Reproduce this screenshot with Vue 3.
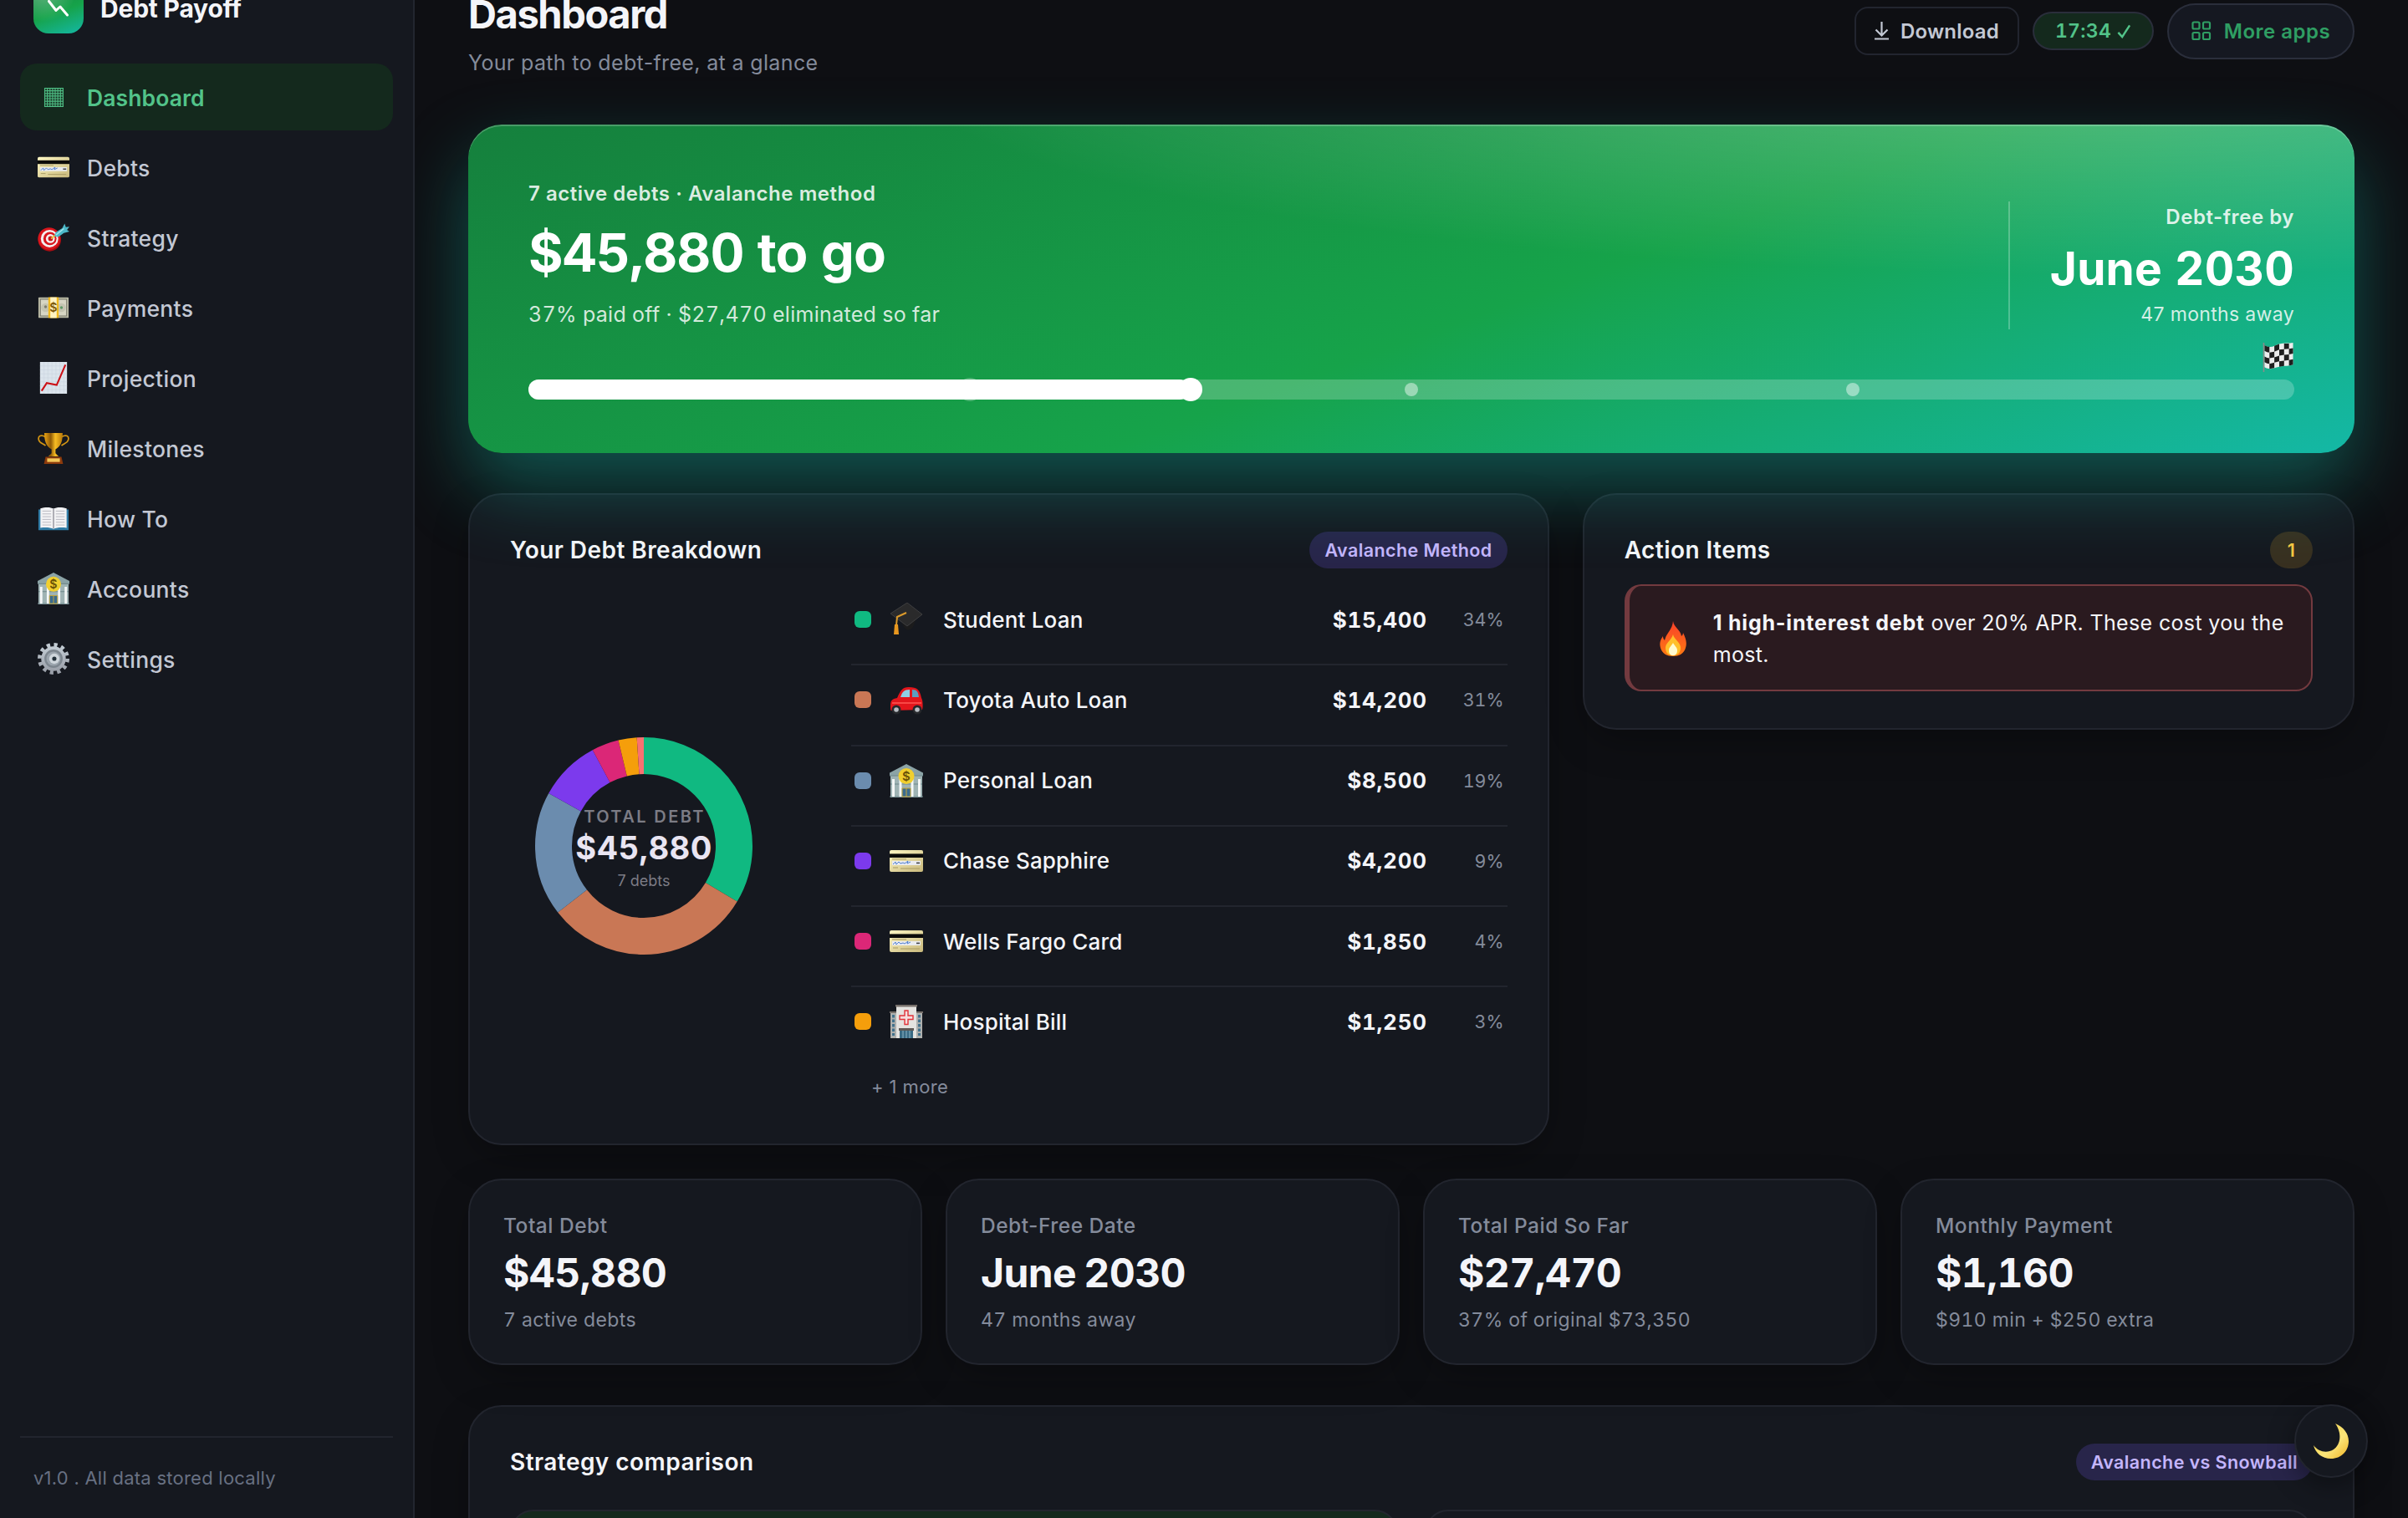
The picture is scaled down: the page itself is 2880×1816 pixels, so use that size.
<template>
    <div class="app">
        <svg class="sprite" aria-hidden="true">
            <defs>
                <linearGradient id="g-card" x1="0" y1="0" x2="1" y2="1"><stop offset="0" stop-color="#fdf6c3" /><stop offset="1" stop-color="#c9b97c" /></linearGradient>
                <linearGradient id="g-gold" x1="0" y1="0" x2="1" y2="0"><stop offset="0" stop-color="#e9a313" /><stop offset=".35" stop-color="#8f5a06" /><stop offset=".6" stop-color="#f7bd24" /><stop offset="1" stop-color="#b87908" /></linearGradient>
                <linearGradient id="g-fire" x1="0" y1="0" x2="0" y2="1"><stop offset="0" stop-color="#f8402a" /><stop offset="1" stop-color="#ff7a12" /></linearGradient>
                <linearGradient id="g-moon" x1="0" y1="0" x2="1" y2="1"><stop offset="0" stop-color="#f3cf3c" /><stop offset=".6" stop-color="#fbe57a" /><stop offset="1" stop-color="#f0b323" /></linearGradient>
                <linearGradient id="g-gear" x1="0" y1="0" x2="0" y2="1"><stop offset="0" stop-color="#c3ccd4" /><stop offset="1" stop-color="#9a9fa8" /></linearGradient>
            </defs>
            <symbol id="i-grid" viewBox="0 0 40 40">
                <path d="M9 9H32V32H9ZM12.300 9V32M15.600 9V32M18.900 9V32M22.100 9V32M25.400 9V32M28.700 9V32M9 12.300H32M9 15.600H32M9 18.900H32M9 22.100H32M9 25.400H32M9 28.700H32" fill="none" stroke="#4dbb82" stroke-width="1.250" />
            </symbol>
            <symbol id="i-card" viewBox="0 0 40 40">
                <rect x="0" y="7" width="40" height="26" rx="2" fill="url(#g-card)" />
                <rect x="0" y="11.4" width="40" height="4.6" fill="#0b0b09" />
                <rect x="3" y="20" width="34" height="5" fill="#e9ebf0" />
                <path d="M4 24l3-3 1 3 3-3 2 2 3-1 2 1 4-3-1 3 4-2" fill="none" stroke="#4f7fd0" stroke-width="1" />
                <path d="M32 22.4h4" stroke="#444" stroke-width="1.6" />
                <path d="M4 28h6M13 29h23M3 17.8h17" stroke="#a99b63" stroke-width="1" />
            </symbol>
            <symbol id="i-target" viewBox="0 0 40 40">
                <circle cx="15" cy="23" r="14.5" fill="#a80c12" />
                <circle cx="14.5" cy="21.5" r="14" fill="#d8161d" />
                <circle cx="15" cy="21.5" r="11" fill="#f4efef" />
                <circle cx="15.5" cy="21.5" r="8.3" fill="#d8161d" />
                <circle cx="16" cy="21.5" r="5.6" fill="#f4efef" />
                <circle cx="16.3" cy="21.5" r="3" fill="#c9161d" />
                <path d="M17 21.5l6-5" stroke="#e8c13a" stroke-width="2" />
                <path d="M21 18.5l2-5 8-5 3-6 1.500 4.500 4.500-.5-3 4 3 2-7 2-7 5z" fill="#4cb8c8" />
                <path d="M23 17l10-8" stroke="#a6e7ee" stroke-width="1.500" />
            </symbol>
            <symbol id="i-cash" viewBox="0 0 40 40">
                <rect x="1" y="7" width="38" height="26" rx="1" fill="#b9b9a4" />
                <rect x="3.500" y="9.500" width="33" height="21" fill="#d7d6c4" stroke="#77776a" stroke-width="1" />
                <circle cx="10" cy="20" r="5.500" fill="#c4c4b1" />
                <circle cx="30" cy="20" r="5.500" fill="#c4c4b1" />
                <circle cx="10" cy="19" r="1.800" fill="#7c7d70" />
                <circle cx="30" cy="20" r="1.800" fill="#5f9a68" />
                <rect x="13.500" y="7" width="13" height="26" fill="#f0b81c" />
                <rect x="16" y="7" width="8" height="26" fill="#fff3c2" />
                <text x="20" y="25.500" text-anchor="middle" font-family="Inter" font-size="15" font-weight="600" fill="#7d5a0a">$</text>
            </symbol>
            <symbol id="i-chart" viewBox="0 0 40 40">
                <rect x="3" y="0" width="34" height="40" fill="#dbe4ec" />
                <path d="M3 5H37M3 10H37M3 15H37M3 20H37M3 25H37M3 30H37M3 35H37M8 0V40M13 0V40M18 0V40M23 0V40M28 0V40M33 0V40" stroke="#c9d5e0" stroke-width=".6" />
                <path d="M5 36.500l6.500-10 12.500 2.500L35 3.500" fill="none" stroke="#cc1117" stroke-width="2.200" />
            </symbol>
            <symbol id="i-trophy" viewBox="0 0 40 40">
                <path d="M10 6C4 2.500 0 5 1.500 10c1 4 5 4 8.500 7M30 6c6-3.500 10-1 8.500 4-1 4-5 4-8.500 7" fill="none" stroke="#d29413" stroke-width="1.800" />
                <path d="M8.500 1h23c0 10-2 17-9 20.500v5l4 4h-13l4-4v-5C10.500 18 8.500 11 8.500 1z" fill="url(#g-gold)" />
                <path d="M10 31h20l2 9H8z" fill="#8c3a0c" />
                <path d="M12 33h16v4.500H12z" fill="#f2c85a" />
            </symbol>
            <symbol id="i-book" viewBox="0 0 40 40">
                <path d="M1 9h38v26H1z" fill="#2f7ba5" />
                <path d="M3.500 7.500C9 6 16 5.500 20 8c4-2.500 11-2 16.500-.5V32c-6-1-13-.5-16.500 1.500C16.500 31.500 9.500 31 3.500 32z" fill="#f2f2f4" />
                <path d="M20 8v25" stroke="#9a9aa2" stroke-width="1.600" />
                <path d="M6 11h11M6 14.500h11M6 18h11M6 21.500h11M6 25h11M6 28.500h11M23 11h11M23 14.500h11M23 18h11M23 21.500h11M23 25h11M23 28.500h11" stroke="#b3b3bb" stroke-width=".9" />
            </symbol>
            <symbol id="i-bank" viewBox="0 0 40 40">
                <path d="M20 0l20 10.500V14H0v-3.500z" fill="#8ba3a6" />
                <path d="M1 14h38v26H1z" fill="#9fb3b4" />
                <path d="M0 14h40M1 24h38M0 39h40" stroke="#6f888b" stroke-width="1.200" />
                <path d="M4.500 18v21M13 18v21M27 18v21M35.500 18v21" stroke="#f5f7f7" stroke-width="3" />
                <path d="M15 29h10v10H15z" fill="#3b6b8e" stroke="#c5a63a" stroke-width="1" />
                <path d="M20 29v10" stroke="#c5a63a" />
                <circle cx="20" cy="14.500" r="9.500" fill="#f1cf2f" />
                <text x="20" y="20" text-anchor="middle" font-family="Inter" font-size="15" font-weight="600" fill="#6b5308">$</text>
            </symbol>
            <symbol id="i-gear" viewBox="0 0 40 40">
                <circle cx="20" cy="20" r="17.500" fill="none" stroke="url(#g-gear)" stroke-width="5" stroke-dasharray="4.400 4.763" />
                <circle cx="20" cy="20" r="15.500" fill="url(#g-gear)" />
                <circle cx="20" cy="20" r="11.500" fill="#7d868f" />
                <circle cx="20" cy="20" r="9" fill="#9ba4ad" />
                <circle cx="21" cy="20" r="6.500" fill="#cfd6dc" />
                <circle cx="21" cy="20" r="2.700" fill="#23303a" />
            </symbol>
            <symbol id="i-cap" viewBox="0 0 40 40">
                <path d="M13 20l4 9c4 6 10 4 12-2l3-9z" fill="#1b1b1c" />
                <path d="M21 0l18 14-18 14L1 13z" fill="#2a2a2b" stroke="#464647" stroke-width=".8" />
                <path d="M20 12L9 17l-1 10" fill="none" stroke="#dc9a2b" stroke-width="2" />
                <path d="M6 26h4l1 12H5z" fill="#e8971f" />
            </symbol>
            <symbol id="i-car" viewBox="0 0 40 40">
                <path d="M1 27c0-6 2-8 8-9 4-9 6-13 14-13 10 0 13 3 15 13 2 3 2 12 1 14l-37 1c-1 0-1-3-1-6z" fill="#e3161c" />
                <path d="M13 17c2-6 4-9 11-9v9z" fill="#8fd0e6" />
                <path d="M27 8c6 0 7 3 8 9h-8z" fill="#5e9fc0" />
                <path d="M3 24h35" stroke="#ff5a54" stroke-width="1.400" />
                <circle cx="8" cy="32" r="5.500" fill="#26282c" />
                <circle cx="8" cy="32" r="2.800" fill="#b7bcc2" />
                <circle cx="33" cy="32" r="5.500" fill="#26282c" />
                <circle cx="33" cy="32" r="2.800" fill="#b7bcc2" />
            </symbol>
            <symbol id="i-hospital" viewBox="0 0 40 40">
                <path d="M1 9h38v31H1z" fill="#aeb0ae" />
                <path d="M8 1h24v39H8z" fill="#e4e3e0" />
                <path d="M7 0h26v2.500H7zM0 8h8v2H0zM32 8h8v2h-8z" fill="#77706b" />
                <path d="M4.500 12v25M35.500 12v25" stroke="#41718c" stroke-width="3" stroke-dasharray="3.500 2" />
                <path d="M18 7h4v6h6v4.500h-6v6h-4v-6h-6V13h6z" fill="#f6dede" stroke="#e0343a" stroke-width="1.400" />
                <path d="M11 28h18v3H11z" fill="#5f5a57" />
                <path d="M12 31h16v9H12z" fill="#396a84" />
                <path d="M16 31v9M20 31v9M24 31v9" stroke="#8fb4c4" stroke-width="1" />
            </symbol>
            <symbol id="i-fire" viewBox="0 0 40 44">
                <path d="M20 1c1 8 9 10 10 18 1-1 2-2 2-4 3 6 5 12 3 18-2 7-8 10-15 10S7 40 5 33c-2-7 1-11 3-14 0 3 1 4 2 5 2-9 9-12 10-23z" fill="url(#g-fire)" />
                <path d="M20 17c1 6 9 9 9 16 0 6-4 9.500-9 9.500S11 39 11 33c0-6 7-9 9-16z" fill="#ffc02b" />
                <path d="M20 27c1 3 5 5 5 9s-2 6-5 6-5-2-5-6 4-6 5-9z" fill="#fffbd0" />
            </symbol>
            <symbol id="i-flag" viewBox="0 0 38 38">
                <path d="M1 1v36" stroke="#8b8b8b" stroke-width="1.600" />
                <path d="M2 4c8 5 12 0 18-1.500S32 2 37 1v27c-5 2-10 1-17 2.500S9 35 2 31z" fill="#ececec" />
                <path d="M2 4c2 1.300 4 2 6 2v7c-2 0-4-.7-6-2zM14 5l6-2.500v7L14 12zM26 2h6v6.500l-6 .5zM8 13l6-1v7l-6 1zM20 9.500l6-.5v7l-6 1zM32 8.500l5-.8v6.800l-5 1zM2 18c2 1.300 4 2 6 2v7c-2 0-4-.7-6-2zM14 19l6-2v7l-6 1.500zM26 16l6-.5v6.800l-6 .7zM8 27l6-1.500V32l-6 1zM20 24l6-1v6.500l-6 1zM32 22.300l5-1V28l-5 1.300z" fill="#1f1f1f" />
            </symbol>
            <symbol id="i-moon" viewBox="0 0 42 42">
                <path d="M26 0c10 4 16 12 16 21 0 12-9 21-21 21C10 42 2 35 0 26c6 8 16 10 24 5 9-6 10-20 2-31z" fill="url(#g-moon)" />
            </symbol>
        </svg>

        <aside class="sidebar">
            <div class="brand">
                <span class="brand__logo">
                    <svg width="26" height="20" viewBox="0 0 26 20"><path d="M1.500 1.500l8.500 11 5-4.500 8.500 10" fill="none" stroke="#fff" stroke-width="3" stroke-linecap="round" stroke-linejoin="round" /></svg>
                </span>
                <span class="brand__name">Debt Payoff</span>
            </div>
            <nav class="nav">
                <a v-for="n in nav" :key="n.label" class="nav__item" :class="[n.active && 'nav__item--active']">
                    <svg class="nav__icon"><use :href="'#i-' + n.icon" /></svg>
                    <span>{{ n.label }}</span>
                </a>
            </nav>
            <div class="sidebar__foot">v1.0 . All data stored locally</div>
        </aside>

        <main class="main">
            <header class="header">
                <div>
                    <h1 class="header__title">Dashboard</h1>
                    <p class="header__sub">Your path to debt-free, at a glance</p>
                </div>
                <div class="actions">
                    <button class="btn-download">
                        <svg width="17" height="22" viewBox="0 0 17 22"><path d="M8.500 0v16M1.500 9.500l7 7 7-7M0 20.500h17" fill="none" stroke="currentColor" stroke-width="2.200" /></svg>
                        <span>Download</span>
                    </button>
                    <span class="sync"><span>17:34</span><svg width="17" height="17" viewBox="0 0 18 18"><path d="M1.500 10.500l5 5.500L16 1.500" fill="none" stroke="currentColor" stroke-width="2.600" /></svg></span>
                    <button class="btn-apps">
                        <svg width="24" height="24" viewBox="0 0 24 24" fill="none" stroke="currentColor" stroke-width="2.200"><rect x="1.500" y="1.500" width="8" height="8" rx="1.500" /><rect x="14" y="1.500" width="8" height="8" rx="1.500" /><rect x="1.500" y="14" width="8" height="8" rx="1.500" /><rect x="14" y="14" width="8" height="8" rx="1.500" /></svg>
                        <span>More apps</span>
                    </button>
                </div>
            </header>

            <section class="hero">
                <div class="hero__top">
                    <div>
                        <div class="hero__label">7 active debts · Avalanche method</div>
                        <div class="hero__amount">$45,880 to go</div>
                        <div class="hero__sub">37% paid off · $27,470 eliminated so far</div>
                    </div>
                    <div class="hero__date">
                        <div class="hero__label">Debt-free by</div>
                        <div class="hero__month">June 2030</div>
                        <div class="hero__away">47 months away</div>
                    </div>
                </div>
                <div class="track">
                    <i v-for="d in dots" :key="d" class="track__dot" :class="[d < paid && 'track__dot--passed']" :style="{ left: d + '%' }"></i>
                    <div class="track__fill" :style="{ width: paid + '%' }"></div>
                    <svg class="track__flag"><use href="#i-flag" /></svg>
                </div>
            </section>

            <div class="row">
                <section class="card">
                    <div class="card__head">
                        <h2 class="card__title">Your Debt Breakdown</h2>
                        <span class="pill">Avalanche Method</span>
                    </div>
                    <div class="breakdown">
                        <svg class="donut" viewBox="0 0 320 320">
                            <circle v-for="s in slices" :key="s.color" cx="160" cy="160" r="108" fill="none" :stroke="s.color" stroke-width="44" pathLength="100" :stroke-dasharray="s.len + ' ' + (100 - s.len)" :stroke-dashoffset="-s.start" transform="rotate(-90 160 160)" />
                            <text class="donut__label" x="161" y="132">TOTAL DEBT</text>
                            <text class="donut__value" x="160" y="176">$45,880</text>
                            <text class="donut__count" x="160" y="208">7 debts</text>
                        </svg>
                        <div class="debts">
                            <div v-for="d in debts" :key="d.name" class="debt">
                                <span class="debt__swatch" :style="{ background: d.color }"></span>
                                <svg class="debt__icon"><use :href="'#i-' + d.icon" /></svg>
                                <span class="debt__name">{{ d.name }}</span>
                                <span class="debt__amount">{{ d.amount }}</span>
                                <span class="debt__pct">{{ d.pct }}</span>
                            </div>
                            <div class="debts__more">+ 1 more</div>
                        </div>
                    </div>
                </section>

                <section class="card card--top">
                    <div class="card__head">
                        <h2 class="card__title">Action Items</h2>
                        <span class="pill pill--warn">1</span>
                    </div>
                    <div class="alert">
                        <svg class="alert__icon"><use href="#i-fire" /></svg>
                        <p class="alert__text"><strong>1 high-interest debt</strong> over 20% APR. These cost you the most.</p>
                    </div>
                </section>
            </div>

            <div class="stats">
                <div v-for="s in stats" :key="s.label" class="stat">
                    <div class="stat__label">{{ s.label }}</div>
                    <div class="stat__value">{{ s.value }}</div>
                    <div class="stat__sub">{{ s.sub }}</div>
                </div>
            </div>

            <section class="card strategy">
                <div class="card__head">
                    <h2 class="card__title">Strategy comparison</h2>
                    <span class="pill">Avalanche vs Snowball</span>
                </div>
                <div class="strategy__grid">
                    <div class="strategy__panel strategy__panel--active"></div>
                    <div class="strategy__panel"></div>
                </div>
            </section>
        </main>

        <button class="theme"><svg width="42" height="42"><use href="#i-moon" /></svg></button>
    </div>
</template>

<script setup>
const nav = [
    { label: 'Dashboard', icon: 'grid', active: true },
    { label: 'Debts', icon: 'card' },
    { label: 'Strategy', icon: 'target' },
    { label: 'Payments', icon: 'cash' },
    { label: 'Projection', icon: 'chart' },
    { label: 'Milestones', icon: 'trophy' },
    { label: 'How To', icon: 'book' },
    { label: 'Accounts', icon: 'bank' },
    { label: 'Settings', icon: 'gear' }
];

const paid = 37.45;
const dots = [25, 50, 75];

const debts = [
    { name: 'Student Loan', icon: 'cap', amount: '$15,400', pct: '34%', color: '#10b981' },
    { name: 'Toyota Auto Loan', icon: 'car', amount: '$14,200', pct: '31%', color: '#c97755' },
    { name: 'Personal Loan', icon: 'bank', amount: '$8,500', pct: '19%', color: '#6b8cae' },
    { name: 'Chase Sapphire', icon: 'card', amount: '$4,200', pct: '9%', color: '#7c3aed' },
    { name: 'Wells Fargo Card', icon: 'card', amount: '$1,850', pct: '4%', color: '#db2777' },
    { name: 'Hospital Bill', icon: 'hospital', amount: '$1,250', pct: '3%', color: '#f59e0b' }
];

// the seventh debt is folded into "+ 1 more" but still has its slice
const balances = [15400, 14200, 8500, 4200, 1850, 1250, 480];
const colors = [...debts.map((d) => d.color), '#f87171'];
const total = balances.reduce((a, b) => a + b, 0);
let start = 0;
const slices = balances.map((b, i) => {
    const len = (b / total) * 100;
    const slice = { color: colors[i], len, start };
    start += len;
    return slice;
});

const stats = [
    { label: 'Total Debt', value: '$45,880', sub: '7 active debts' },
    { label: 'Debt-Free Date', value: 'June 2030', sub: '47 months away' },
    { label: 'Total Paid So Far', value: '$27,470', sub: '37% of original $73,350' },
    { label: 'Monthly Payment', value: '$1,160', sub: '$910 min + $250 extra' }
];
</script>

<style>
html,
body {
    margin: 0;
    background: #0e0f13;
}
</style>

<style scoped>
.app {
    display: flex;
    width: 2880px;
    height: 1816px;
    overflow: hidden;
    background: #0e0f13;
    color: #f4f5f9;
    font-family: Inter, 'Liberation Sans', sans-serif;
    font-size: 26px;
}
.sprite {
    position: absolute;
    width: 0;
    height: 0;
}
h1,
h2,
p {
    margin: 0;
}
button {
    font-family: inherit;
}

/* sidebar */
.sidebar {
    position: relative;
    z-index: 2;
    box-sizing: border-box;
    flex: none;
    display: flex;
    flex-direction: column;
    width: 496px;
    height: 1816px;
    padding: 0 24px;
    background: #15181f;
    border-right: 2px solid #22262f;
}
.brand {
    display: flex;
    align-items: center;
    gap: 20px;
    height: 60px;
    margin: -20px 0 36px 16px;
}
.brand__logo {
    display: flex;
    align-items: center;
    justify-content: center;
    width: 60px;
    height: 60px;
    border-radius: 18px;
    background: radial-gradient(circle at 20% 10%, rgba(255, 255, 255, 0.35), transparent 55%), linear-gradient(160deg, #15803d, #16a34a 55%, #14b8a6);
}
.brand__name {
    font-size: 30px;
    font-weight: 700;
    letter-spacing: -0.2px;
}
.nav {
    display: flex;
    flex-direction: column;
    gap: 4px;
}
.nav__item {
    display: flex;
    align-items: center;
    gap: 21px;
    height: 80px;
    padding: 0 21px;
    border-radius: 20px;
    color: #c3c8d4;
    font-size: 26.5px;
    font-weight: 500;
    letter-spacing: 0.3px;
}
.nav__item span {
    padding-top: 1px;
}
.nav__item--active {
    background: #14291d;
    color: #52c389;
    font-weight: 600;
    letter-spacing: 0.1px;
}
.nav__icon {
    width: 38px;
    height: 38px;
}
.sidebar__foot {
    margin-top: auto;
    height: 96px;
    padding-left: 16px;
    border-top: 2px solid #22252e;
    color: #687082;
    font-size: 22px;
    line-height: 96px;
    letter-spacing: 0.25px;
}

/* header */
.main {
    flex: 1;
    padding: 0 64px;
}
.header {
    display: flex;
    justify-content: space-between;
    height: 106px;
    margin: -12px 0 55px;
}
.header__title {
    padding-top: 1px;
    font-size: 47px;
    font-weight: 700;
    line-height: 56px;
    letter-spacing: -1.4px;
}
.header__sub {
    margin-top: 10px;
    color: #848b9b;
    font-size: 25px;
    line-height: 40px;
    letter-spacing: 0.35px;
}
.actions {
    display: flex;
    align-items: center;
    gap: 16px;
    height: 98px;
}
.btn-download,
.btn-apps,
.sync {
    display: flex;
    align-items: center;
    justify-content: center;
    box-sizing: border-box;
    padding: 0;
    border: 2px solid #22252f;
    font-size: 24px;
    font-weight: 600;
}
.btn-download {
    gap: 14px;
    width: 197px;
    height: 58px;
    border-radius: 16px;
    background: transparent;
    color: #c3c8d4;
    letter-spacing: 0.2px;
}
.sync {
    gap: 7px;
    width: 145px;
    height: 46px;
    border-color: #2a2e3b;
    border-radius: 23px;
    background: #14291d;
    color: #52c389;
    font-size: 23px;
    font-variant-numeric: tabular-nums;
    letter-spacing: 0.3px;
}
.btn-apps {
    gap: 15px;
    width: 224px;
    height: 67px;
    border-color: #2a2e3b;
    border-radius: 34px;
    background: #151821;
    color: #2f9e63;
    letter-spacing: 0.5px;
}

/* hero */
.hero {
    position: relative;
    box-sizing: border-box;
    height: 393px;
    padding: 66px 72px 0;
    border-radius: 40px;
    background: radial-gradient(120% 120% at 88% -20%, rgba(255, 255, 255, 0.3), transparent 55%), linear-gradient(160deg, #15803d, #16a34a 55%, #14b8a6);
    box-shadow: inset 0 2px 0 rgba(255, 255, 255, 0.22), 0 40px 88px rgba(20, 184, 166, 0.4);
}
.hero__top {
    display: flex;
    justify-content: space-between;
    align-items: flex-end;
}
.hero__label {
    color: rgba(255, 255, 255, 0.85);
    font-size: 24px;
    font-weight: 600;
    line-height: 34px;
    letter-spacing: 0.55px;
}
.hero__amount {
    margin: 17px 0 18px;
    color: #fff;
    font-size: 63.5px;
    font-weight: 700;
    line-height: 72px;
    letter-spacing: -0.9px;
    font-variant-numeric: tabular-nums;
}
.hero__sub {
    padding-top: 1px;
    margin-bottom: -1px;
    color: rgba(255, 255, 255, 0.82);
    font-size: 25px;
    line-height: 38px;
    letter-spacing: 0.3px;
    font-variant-numeric: tabular-nums;
}
.hero__date {
    padding: 2px 0 0 48px;
    border-left: 2px solid rgba(255, 255, 255, 0.25);
    text-align: right;
}
.hero__month {
    margin: 14px 0 7px;
    color: #fff;
    font-size: 55px;
    font-weight: 700;
    line-height: 60px;
    letter-spacing: 0.2px;
    font-variant-numeric: tabular-nums;
}
.hero__away {
    color: rgba(255, 255, 255, 0.82);
    font-size: 23px;
    line-height: 36px;
    letter-spacing: 0.35px;
}
.track {
    position: relative;
    height: 24px;
    margin-top: 60px;
    border-radius: 12px;
    background: rgba(255, 255, 255, 0.22);
}
.track__fill {
    position: relative;
    height: 24px;
    border-radius: 12px;
    background: #fff;
}
.track__fill::after {
    content: '';
    position: absolute;
    top: -2px;
    right: -15px;
    width: 28px;
    height: 28px;
    border-radius: 50%;
    background: #fff;
}
.track__dot {
    position: absolute;
    top: 4px;
    width: 16px;
    height: 16px;
    margin-left: -8px;
    border-radius: 50%;
    background: rgba(255, 255, 255, 0.45);
}
.track__dot--passed {
    box-shadow: 0 0 0 6px rgba(255, 255, 255, 0.25);
}
.track__flag {
    position: absolute;
    right: 0;
    bottom: 32px;
    width: 38px;
    height: 37px;
}

/* cards */
.row {
    display: grid;
    grid-template-columns: 1.4fr 1fr;
    gap: 40px;
    margin-top: 48px;
}
.card {
    padding: 44px 48px;
    border: 2px solid #22252e;
    border-radius: 40px;
    background: #15181f;
    box-shadow: 0 16px 48px -8px rgba(0, 0, 0, 0.35);
}
.card--top {
    align-self: start;
}
.card__head {
    display: flex;
    align-items: center;
    justify-content: space-between;
    height: 43px;
    margin-bottom: 20px;
}
.card__title {
    padding-top: 1px;
    font-size: 28px;
    font-weight: 600;
    letter-spacing: 0.45px;
}
.pill {
    box-sizing: border-box;
    min-width: 51px;
    padding: 0 18px;
    border-radius: 22px;
    background: #28254a;
    color: #c4b5fd;
    font-size: 21.5px;
    font-weight: 600;
    line-height: 44px;
    letter-spacing: 0.4px;
    text-align: center;
}
.pill--warn {
    background: #383020;
    color: #f5c842;
}
.breakdown {
    display: grid;
    grid-template-columns: 320px 1fr;
    align-items: center;
    gap: 88px;
    padding-top: 1px;
}
.donut text {
    text-anchor: middle;
}
.donut__label {
    fill: #7c7c85;
    font-size: 20px;
    font-weight: 600;
    letter-spacing: 0.12em;
}
.donut__value {
    fill: #e9e5f2;
    font-size: 38px;
    font-weight: 700;
    letter-spacing: 0.4px;
}
.donut__count {
    fill: #7c7c85;
    font-size: 18px;
}
.debt {
    display: flex;
    align-items: center;
    box-sizing: border-box;
    height: 96.25px;
    padding: 0 4px 12px;
    border-bottom: 2px solid #22252e;
}
.debt:nth-last-child(2) {
    border-color: transparent;
}
.debt__swatch {
    width: 20px;
    height: 20px;
    border-radius: 6px;
}
.debt__icon {
    width: 40px;
    height: 40px;
    margin: 0 24px 0 22px;
}
.debt__name {
    font-weight: 500;
    letter-spacing: 0.2px;
}
.debt__amount {
    margin-left: auto;
    font-weight: 700;
    font-variant-numeric: tabular-nums;
    letter-spacing: 0.7px;
}
.debt__pct {
    width: 92px;
    color: #848b9b;
    font-size: 21.5px;
    font-variant-numeric: tabular-nums;
    text-align: right;
}
.debts__more {
    padding-left: 24px;
    color: #848b9b;
    font-size: 22px;
    line-height: 45.5px;
    margin-bottom: 1px;
    letter-spacing: 0.4px;
}
.alert {
    display: flex;
    align-items: center;
    gap: 28px;
    box-sizing: border-box;
    height: 128px;
    padding: 1px 12px 0 32px;
    border: 2px solid #733a3f;
    border-left-width: 6px;
    border-radius: 20px;
    background: #2a1a1f;
}
.alert__icon {
    flex: none;
    width: 40px;
    height: 44px;
}
.alert__text {
    font-size: 25px;
    line-height: 38px;
    letter-spacing: 0.35px;
}
.alert__text strong {
    font-weight: 700;
    letter-spacing: 0.8px;
}

/* stats */
.stats {
    display: grid;
    grid-template-columns: repeat(4, 1fr);
    gap: 28px;
    margin-top: 40px;
}
.stat {
    box-sizing: border-box;
    height: 223px;
    padding: 37px 40px 0;
    border: 2px solid #22252e;
    border-radius: 40px;
    background: #15181f;
    box-shadow: 0 16px 48px -8px rgba(0, 0, 0, 0.35);
}
.stat__label {
    color: #848b9b;
    font-size: 24.5px;
    font-weight: 500;
    line-height: 34px;
    letter-spacing: 0.5px;
}
.stat__value {
    margin: 12px 0 11px;
    font-size: 48px;
    font-weight: 700;
    line-height: 56px;
    letter-spacing: -0.6px;
    word-spacing: -3px;
    font-variant-numeric: tabular-nums;
}
.stat__sub {
    color: #848b9b;
    font-size: 23px;
    line-height: 34px;
    letter-spacing: 0.4px;
    font-variant-numeric: tabular-nums;
}

/* strategy comparison */
.strategy {
    margin-top: 48px;
}
.strategy .card__head {
    margin-bottom: 36px;
}
.strategy__grid {
    display: grid;
    grid-template-columns: 1fr 1fr;
    gap: 32px;
}
.strategy__panel {
    height: 240px;
    border: 2px solid #22252e;
    border-radius: 28px;
}
.strategy__panel--active {
    background: #14291d;
}

.theme {
    position: fixed;
    right: 48px;
    bottom: 48px;
    z-index: 3;
    display: flex;
    align-items: center;
    justify-content: center;
    width: 88px;
    height: 88px;
    padding: 0;
    border: 2px solid #22252e;
    border-radius: 50%;
    background: #15181f;
    box-shadow: 0 8px 32px rgba(0, 0, 0, 0.4);
}
</style>
